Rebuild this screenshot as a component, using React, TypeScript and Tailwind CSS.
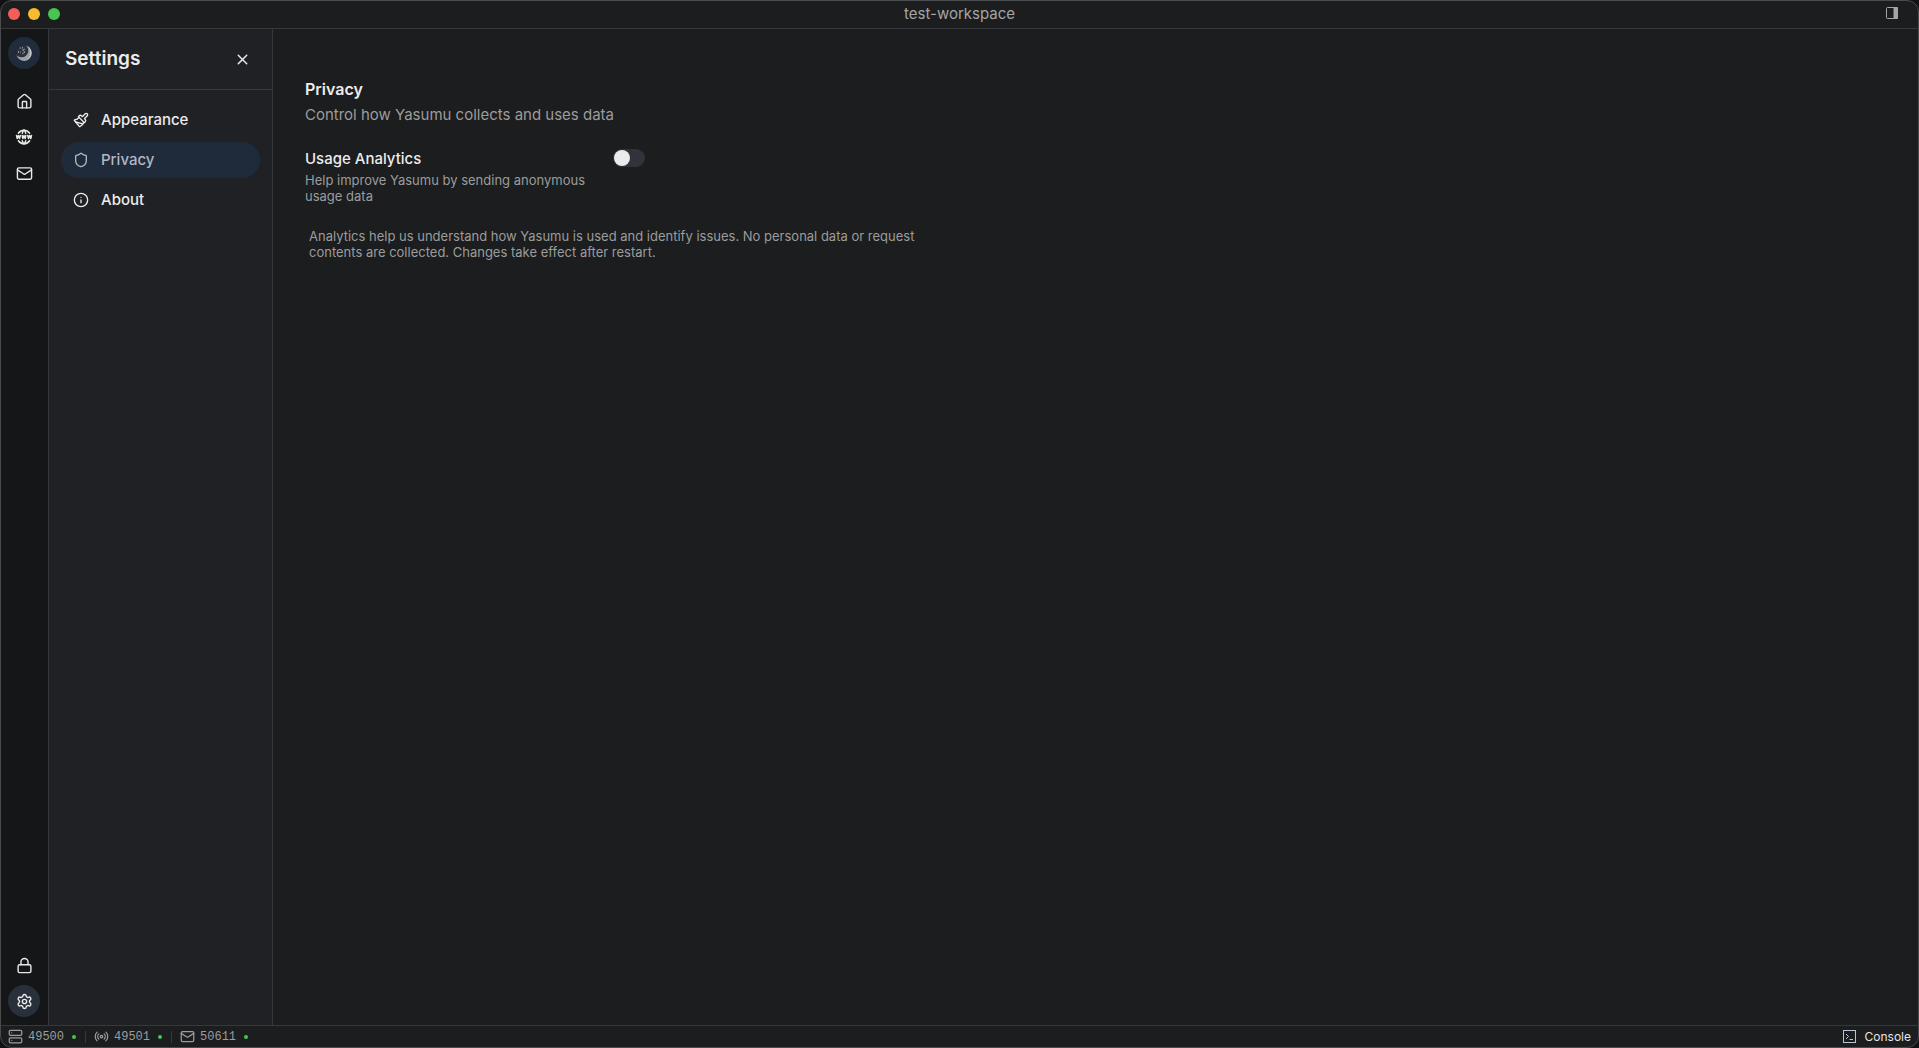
import { useState } from "react";
import { House, Info, Lock, Mail, Paintbrush, Radio, Server, Settings, Shield, X } from "lucide-react";
import { TbWorldWww } from "react-icons/tb";

function Moon() {
  return (
    <svg viewBox="0 0 16 16" className="size-4" aria-hidden="true">
      <circle cx="8" cy="8" r="7.5" fill="#2c323d" />
      <path d="M10.500 .7A7.800 7.800 0 1 1 .5 10.200 6.300 6.300 0 0 0 10.500 .7Z" fill="#9da1aa" />
      <path d="M12 1.500a7.800 7.800 0 0 1-1.500 13.500A9 9 0 0 0 12 1.500Z" fill="#d6d8dd" />
      <path d="M3.500 3h1.500M6.500 2v1.500M9 4 6.500 5 9 7 6 9M2.500 6v2M4.500 6.500v1" stroke="#8d919a" strokeWidth="1" fill="none" />
    </svg>
  );
}

function SidePanelIcon() {
  return (
    <svg viewBox="0 0 12 12" className="size-3" aria-hidden="true">
      <rect x=".5" y=".5" width="11" height="11" rx="1" fill="none" stroke="currentColor" />
      <path d="M7.500 0H11a1 1 0 0 1 1 1v10a1 1 0 0 1-1 1H7.500Z" fill="currentColor" />
    </svg>
  );
}

function ConsoleIcon() {
  return (
    <svg viewBox="0 0 13 13" className="size-[13px]" fill="none" stroke="#b9c5d6" aria-hidden="true">
      <rect x=".5" y=".5" width="12" height="12" />
      <path d="m3 4 2.500 2.500L3 9M6.500 9.500H10" />
    </svg>
  );
}

const railButton = "flex size-8 items-center justify-center rounded-full";

function Rail() {
  return (
    <nav aria-label="Workspace" className="flex w-12 shrink-0 flex-col border-r border-[#36383b] bg-[#151617] py-2 pl-[7px] text-[#e8e8e8]">
      <button aria-label="Yasumu" className={`${railButton} mb-4 bg-[#202b3b]`}><Moon /></button>
      <div className="flex flex-col gap-1">
        <button aria-label="Home" className={railButton}><House size={17} /></button>
        <button aria-label="Network" className={railButton}><TbWorldWww size={18} /></button>
        <button aria-label="Mail" className={railButton}><Mail size={17} /></button>
      </div>
      <div className="mt-auto flex flex-col gap-1">
        <button aria-label="Lock" className={railButton}><Lock size={17} /></button>
        <button aria-label="Settings" className={`${railButton} bg-[#27303b]`}><Settings size={17} /></button>
      </div>
    </nav>
  );
}

const items = [
  { label: "Appearance", Icon: Paintbrush },
  { label: "Privacy", Icon: Shield },
  { label: "About", Icon: Info },
];

function SettingsPanel({ active, onSelect }: { active: string; onSelect: (label: string) => void }) {
  return (
    <aside className="flex w-56 shrink-0 flex-col border-r border-[#36383b] bg-[#202124]">
      <header className="flex items-center justify-between border-b border-[#36383b] px-4 py-4">
        <h1 className="text-[19px] leading-7 font-semibold">Settings</h1>
        <button aria-label="Close settings" className="flex size-7 items-center justify-center"><X size={17} /></button>
      </header>
      <nav aria-label="Settings sections" className="flex flex-col gap-1 p-3">
        {items.map(({ label, Icon }) => (
          <button
            key={label}
            onClick={() => onSelect(label)}
            className={`flex h-9 items-center gap-3 rounded-full px-3 text-[15px] font-medium ${label === active ? "bg-[#1f2a3a] text-[#b0b7c3]" : "text-[#ececec]"}`}
          >
            <Icon size={16} />
            {label}
          </button>
        ))}
      </nav>
    </aside>
  );
}

function Privacy() {
  const [on, setOn] = useState(false);
  return (
    <main className="flex-1 px-8 py-12">
      <h2 className="text-base leading-6 font-semibold">Privacy</h2>
      <p className="mt-1 text-[15px] leading-5 text-[#9b9c9d]">Control how Yasumu collects and uses data</p>
      <div className="mt-6 flex max-w-85 items-start justify-between">
        <div className="max-w-72">
          <label htmlFor="analytics" className="block text-[15px] leading-5 font-medium">Usage Analytics</label>
          <p className="mt-[3px] text-[13px] leading-4 text-[#9b9c9d]">Help improve Yasumu by sending anonymous usage data</p>
        </div>
        <input
          id="analytics"
          type="checkbox"
          role="switch"
          checked={on}
          onChange={() => setOn(!on)}
          className="flex h-[18px] w-8 shrink-0 appearance-none items-center rounded-full border border-transparent bg-[#31333a] before:size-4 before:rounded-full before:bg-[#ebebeb] checked:justify-end checked:bg-[#3b6ea8]"
        />
      </div>
      <p className="mt-6 max-w-160 px-1 text-[13px] leading-4 text-[#9b9c9d]">
        Analytics help us understand how Yasumu is used and identify issues. No personal data or request contents are collected. Changes take effect after restart.
      </p>
    </main>
  );
}

const ports = [
  { port: "49500", Icon: Server },
  { port: "49501", Icon: Radio },
  { port: "50611", Icon: Mail },
];

function StatusBar() {
  return (
    <footer className="flex h-[22px] items-center justify-between border-t border-[#36383b] px-[7px]">
      <ul className="flex items-center gap-2 font-['Liberation_Mono',monospace] text-xs text-[#9b9c9d]">
        {ports.map(({ port, Icon }, i) => (
          <li key={port} className="flex items-center gap-2">
            {i > 0 && <span className="h-3 w-px bg-[#36383b]" />}
            <button className="flex items-center gap-[5px]">
              <Icon size={15} strokeWidth={2} />
              {port}
              <span className="mr-px ml-[3px] size-1 rounded-full bg-[#47c552]" />
            </button>
          </li>
        ))}
      </ul>
      <button className="flex items-center gap-[9px] text-xs text-[#e4e6ea]">
        <ConsoleIcon />
        Console
      </button>
    </footer>
  );
}

export default function App() {
  const [active, setActive] = useState("Privacy");
  return (
    <div className="h-screen bg-[#111213] font-['Inter',sans-serif] text-[#ececec]">
      <div className="flex h-full flex-col overflow-hidden rounded-xl border border-[#4a4b4d] bg-[#1b1d1e]">
        <header className="grid h-7 shrink-0 grid-cols-3 items-center border-b border-[#36383b] px-[7px] pb-0.5">
          <div className="flex gap-2">
            <button aria-label="Close" className="size-3 rounded-full bg-[#f15f58]" />
            <button aria-label="Minimize" className="size-3 rounded-full bg-[#f7bb30]" />
            <button aria-label="Zoom" className="size-3 rounded-full bg-[#47c552]" />
          </div>
          <p className="text-center text-[15px] leading-5 text-[#a4a5a6]">test-workspace</p>
          <button aria-label="Toggle side panel" className="mr-[13px] justify-self-end pb-0.5 text-[#a4a5a6]"><SidePanelIcon /></button>
        </header>
        <div className="flex min-h-0 flex-1">
          <Rail />
          <SettingsPanel active={active} onSelect={setActive} />
          <Privacy />
        </div>
        <StatusBar />
      </div>
    </div>
  );
}
